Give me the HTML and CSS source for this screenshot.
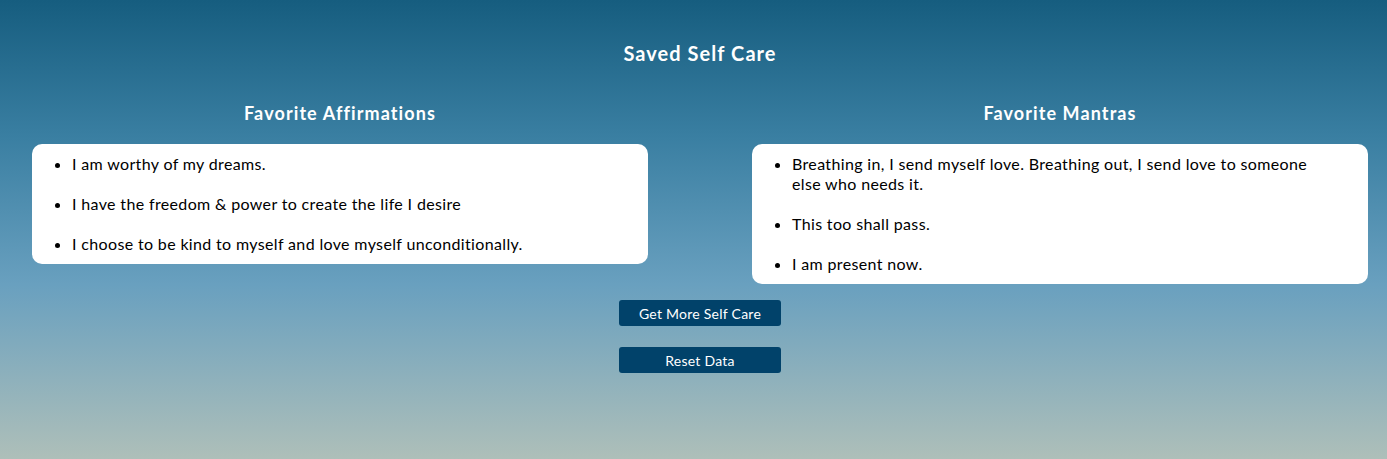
FILE: index.html
```html
<!DOCTYPE html>
<html lang="en">
<head>
<meta charset="utf-8">
<title>Saved Self Care</title>
<link rel="stylesheet" href="styles.css">
</head>
<body>
<main class="page">
  <h1 class="title">Saved Self Care</h1>
  <div class="columns">
    <section class="column">
      <h2 class="column-title">Favorite Affirmations</h2>
      <ul class="card">
        <li>I am worthy of my dreams.</li>
        <li>I have the freedom &amp; power to create the life I desire</li>
        <li>I choose to be kind to myself and love myself unconditionally.</li>
      </ul>
    </section>
    <section class="column">
      <h2 class="column-title">Favorite Mantras</h2>
      <ul class="card">
        <li>Breathing in, I send myself love. Breathing out, I send love to someone else who needs it.</li>
        <li>This too shall pass.</li>
        <li>I am present now.</li>
      </ul>
    </section>
  </div>
  <div class="actions">
    <button class="btn">Get More Self Care</button>
    <button class="btn">Reset Data</button>
  </div>
</main>
</body>
</html>
```
FILE: styles.css
```css
html, body {
  margin: 0;
  padding: 0;
  overflow: hidden;
}
body {
  width: 1387px;
  height: 459px;
  background: linear-gradient(180deg, #165d7f 0%, #3a7fa2 30%, #69a0bf 62%, #aebfb9 100%);
  font-family: Lato, "Liberation Sans", sans-serif;
  color: #000;
}
.page {
  width: 1400px;
  padding-top: 41px;
  display: flex;
  flex-direction: column;
  align-items: center;
}
.title {
  margin: 0;
  font-size: 20px;
  line-height: 24px;
  font-weight: 700;
  letter-spacing: 1.05px;
  color: #fff;
}
.columns {
  margin-top: 36px;
  width: 1400px;
  display: flex;
  gap: 40px;
  align-items: flex-start;
}
.column {
  flex: 1;
  display: flex;
  flex-direction: column;
  align-items: center;
}
.column-title {
  margin: 0 0 19px;
  font-size: 18px;
  line-height: 24px;
  font-weight: 700;
  letter-spacing: 1.1px;
  color: #fff;
}
.card {
  box-sizing: border-box;
  width: 616px;
  margin: 0;
  padding: 10px 40px 10px 40px;
  background: #fff;
  border-radius: 10px;
  font-size: 16px;
  line-height: 20px;
  letter-spacing: 0.35px;
}
.card li + li {
  margin-top: 20px;
}
.actions {
  margin-top: 16px;
  display: flex;
  flex-direction: column;
  align-items: center;
  gap: 21px;
}
.btn {
  width: 162px;
  height: 26px;
  padding: 0;
  border: none;
  border-radius: 3px;
  background: #01426a;
  color: #fff;
  font-family: Lato, "Liberation Sans", sans-serif;
  font-size: 14px;
  letter-spacing: 0.25px;
}
```
